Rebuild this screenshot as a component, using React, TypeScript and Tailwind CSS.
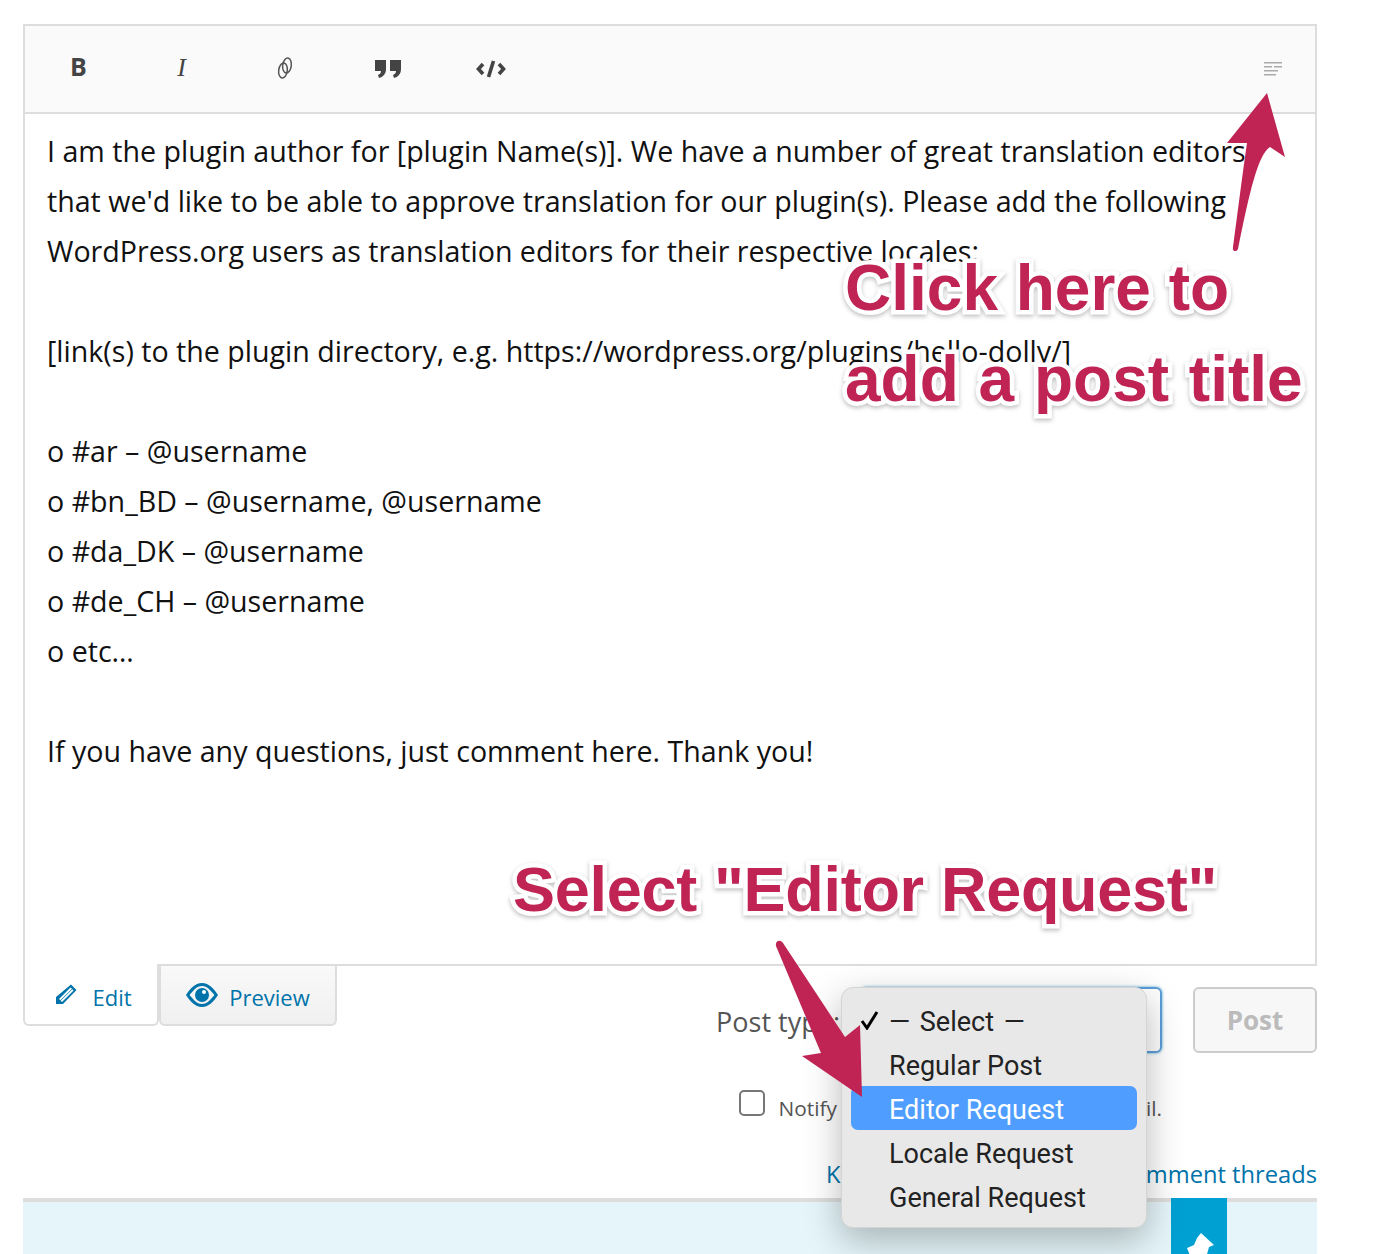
const lines = [
  "I am the plugin author for [plugin Name(s)]. We have a number of great translation editors",
  "that we'd like to be able to approve translation for our plugin(s). Please add the following",
  "WordPress.org users as translation editors for their respective locales:",
  "",
  "[link(s) to the plugin directory, e.g. https://wordpress.org/plugins/hello-dolly/]",
  "",
  "o #ar – @username",
  "o #bn_BD – @username, @username",
  "o #da_DK – @username",
  "o #de_CH – @username",
  "o etc…",
  "",
  "If you have any questions, just comment here. Thank you!",
];

const noteClass =
  "absolute whitespace-nowrap font-['Liberation_Sans',sans-serif] font-bold text-[#bf2454] [-webkit-text-stroke:9px_white] [paint-order:stroke_fill] drop-shadow-[0_2px_2px_rgba(0,0,0,0.25)]";

function Toolbar() {
  return (
    <div className="flex h-[88px] items-center justify-between border-b-2 border-[#ddd] bg-[#fafafa] pl-[2px] pr-[33px] text-[#444]">
      <div className="flex items-center">
        <div className="flex w-[103px] justify-center pb-[5px] font-['Open_Sans',sans-serif] text-[25px] font-bold leading-none">B</div>
        <div className="flex w-[103px] justify-center pb-[2px] font-['Liberation_Serif',serif] text-[26px] italic leading-none">I</div>
        <div className="flex w-[103px] justify-center pb-[2px]">
          <svg width="16" height="22" viewBox="0 0 16 22" fill="none" stroke="#555" strokeWidth="1.500">
            <ellipse cx="6" cy="13.500" rx="4.300" ry="7.500" transform="rotate(8 6 13.500)" />
            <ellipse cx="10" cy="8.500" rx="4.300" ry="7.500" transform="rotate(8 10 8.500)" />
          </svg>
        </div>
        <div className="flex w-[103px] justify-center">
          <svg width="26" height="20" viewBox="0 0 26 20" fill="#444">
            <path d="M0 1h11v9c0 5-3 8-7 9l-1-3c2-1 3-2 3-4H0z" />
            <path d="M15 1h11v9c0 5-3 8-7 9l-1-3c2-1 3-2 3-4h-6z" />
          </svg>
        </div>
        <div className="flex w-[103px] justify-center pb-[1px]">
          <svg width="30" height="18" viewBox="0 0 30 18" fill="none" stroke="#444" strokeWidth="3.600">
            <path d="M7 4 2.500 9 7 14" />
            <path d="M23 4l4.500 5-4.500 5" />
            <path d="M17.500 1l-5 16" />
          </svg>
        </div>
      </div>
      <svg width="18" height="14" viewBox="0 0 18 14" fill="#aaa">
        <rect x="0" y="0" width="18" height="1.500" />
        <rect x="0" y="4" width="8" height="1.500" />
        <rect x="10" y="4" width="8" height="1.500" />
        <rect x="0" y="8" width="14" height="1.500" />
        <rect x="0" y="12" width="12" height="1.500" />
      </svg>
    </div>
  );
}

function Tabs() {
  return (
    <div className="flex items-start font-['Open_Sans',sans-serif] text-[22px] text-[#0073aa]">
      <div className="relative z-10 -mt-[2px] flex h-[62px] w-[136px] items-center justify-center gap-[15px] rounded-b-[6px] border-x-2 border-b-2 border-[#ddd] bg-white pl-[5px] pt-[6px]">
        <svg className="-mt-[4px]" width="22" height="22" viewBox="0 0 22 22" fill="#0073aa">
          <path fillRule="evenodd" d="M16 .5 21.500 6 8 20H1v-7zM15.500 3.500 4 15l1.300 1.300L17 4.800zM18.500 6.500 7 18l-1.300-1.300L17.300 5.200z" />
        </svg>
        <span>Edit</span>
      </div>
      <div className="flex h-[60px] w-[178px] items-center justify-center gap-[11px] rounded-b-[6px] border-x-2 border-b-2 border-[#ddd] bg-gradient-to-b from-[#f9f9f9] to-[#f0f0f0] pt-[4px]">
        <svg className="-mt-[4px]" width="32" height="24" viewBox="0 0 32 24" fill="#0073aa">
          <path fillRule="evenodd" d="M16 0c7 0 12 6 16 12-4 6-9 12-16 12S4 18 0 12C4 6 9 0 16 0zm0 3C10.500 3 7 8 3.500 12 7 16 10.500 21 16 21s9-5 12.500-9C25 8 21.500 3 16 3z" />
          <circle cx="16" cy="12" r="7" />
          <circle cx="18" cy="9" r="2" fill="#fff" />
        </svg>
        <span>Preview</span>
      </div>
    </div>
  );
}

function Controls() {
  return (
    <div className="flex flex-col items-end pt-[21px] font-['Open_Sans',sans-serif]">
      <div className="flex h-[66px] items-center">
        <span className="pt-[4px] text-[27px] text-[#555]">Post type:</span>
        <div className="ml-[20px] h-[66px] w-[302px] rounded-[6px] border-2 border-[#5b9dd9] shadow-[0_0_3px_rgba(30,140,190,0.8)]" />
        <div className="ml-[31px] flex h-[66px] w-[124px] items-center justify-center rounded-[6px] border-2 border-[#ccc] bg-[#f7f7f7] pt-[1px] text-[26px] font-bold text-[#bbb]">
          Post
        </div>
      </div>
      <div className="mt-[37px] flex h-[30px] items-start pr-[155px]">
        <div className="h-[26px] w-[26px] rounded-[5px] border-2 border-[#777] bg-white" />
        <span className="ml-[14px] mt-[3px] text-[20.850px] leading-[30px] text-[#555]">Notify me of follow-up replies via email.</span>
      </div>
      <div className="mt-[38px] flex h-[33px] w-[491px] justify-between overflow-hidden whitespace-nowrap text-[23.700px] leading-[33px] text-[#0073aa]">
        <span>Keep</span>
        <span>comment threads</span>
      </div>
    </div>
  );
}

function Menu() {
  const items = ["Regular Post", "Editor Request", "Locale Request", "General Request"];
  return (
    <div className="absolute left-[841px] top-[987px] z-20 h-[241px] w-[306px] rounded-[12px] border border-[#d4d4d4] bg-[#e8e8e8] px-[9px] pt-[10px] font-['Roboto',sans-serif] text-[27px] text-[#222] shadow-[0_12px_36px_rgba(0,0,0,0.28)]">
      <div className="flex h-[44px] items-center pt-[4px]">
        <svg className="ml-[9px] -mt-[4px]" width="20" height="20" viewBox="0 0 20 20" fill="none" stroke="#000" strokeWidth="3">
          <path d="M2 11l5 7L17 2" />
        </svg>
        <span className="ml-[9px] [word-spacing:3px]">— Select —</span>
      </div>
      {items.map((item) => (
        <div
          key={item}
          className={
            item === "Editor Request"
              ? "flex h-[44px] items-center rounded-[7px] bg-[#4f9eff] pl-[38px] pt-[4px] text-white"
              : "flex h-[44px] items-center pl-[38px] pt-[4px]"
          }
        >
          {item}
        </div>
      ))}
    </div>
  );
}

export default function App() {
  return (
    <div className="relative h-[1254px] overflow-hidden bg-white">
      <div className="ml-[23px] flex h-full w-[1294px] flex-col pt-[24px]">
        <div className="h-[942px] shrink-0 border-2 border-[#ddd]">
          <Toolbar />
          <div className="pl-[22px] pt-[12px] font-['Open_Sans',sans-serif] text-[28.600px] leading-[50px] text-[#111]">
            {lines.map((line, i) => (
              <div key={i} className="h-[50px] whitespace-nowrap">
                {line}
              </div>
            ))}
          </div>
        </div>
        <div className="flex justify-between">
          <Tabs />
          <Controls />
        </div>
        <div className="mt-[7px] flex min-h-0 flex-1 justify-end border-t-4 border-[#ddd] bg-[#e5f5fa] pr-[90px]">
          <div className="-mt-[4px] h-[60px] w-[56px] bg-[#00a0d2]">
            <svg width="56" height="60" viewBox="1172 1198 56 60" fill="#fff">
              <path d="M1202 1233 1215 1245 1210 1247 1207 1258 1192 1258 1188 1248 1195 1245 1198 1238Z" />
            </svg>
          </div>
        </div>
      </div>

      <Menu />

      <span className={`${noteClass} left-[845px] top-[252px] z-30 text-[64px] leading-[72px]`}>Click here to</span>
      <span className={`${noteClass} left-[845px] top-[343px] z-30 text-[64px] leading-[72px] [word-spacing:2px]`}>add a post title</span>
      <span className={`${noteClass} left-[513px] top-[853px] z-30 text-[63px] leading-[72px] tracking-[-0.3px]`}>Select "Editor Request"</span>

      <svg className="pointer-events-none absolute left-[1220px] top-[90px] z-30" width="70" height="165" viewBox="1220 90 70 165" fill="#bf2454">
        <path d="M1267 93 1285 157 1270 147C1258 155 1250 190 1238 249C1237 252 1232 252 1233 247C1238 210 1243 170 1247 143L1227 143Z" />
      </svg>
      <svg className="pointer-events-none absolute left-[770px] top-[935px] z-30" width="100" height="170" viewBox="770 935 100 170" fill="#bf2454">
        <path d="M776 946C775 941 780 939 783 943L845 1037 860 1025 862 1097 802 1056 821 1053Z" />
      </svg>
    </div>
  );
}
